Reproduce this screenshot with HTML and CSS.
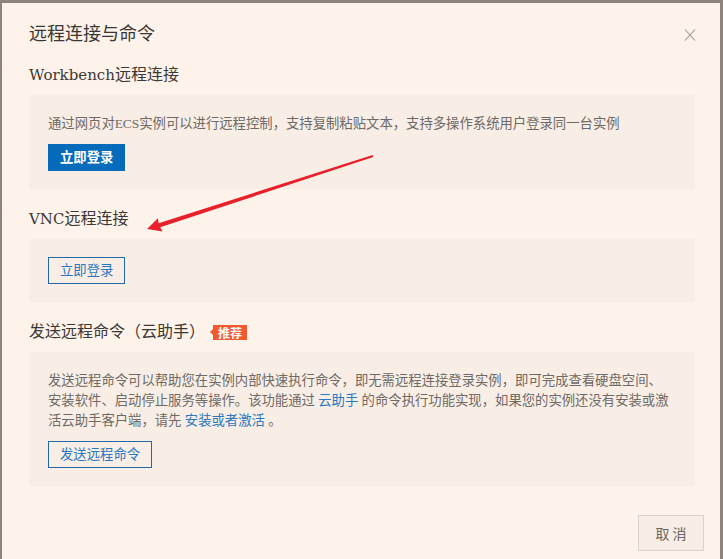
FILE: index.html
```html
<!DOCTYPE html>
<html lang="zh-CN">
<head>
<meta charset="utf-8">
<title>远程连接与命令</title>
<link rel="stylesheet" href="styles.css">
</head>
<body>
<div class="dialog">
  <div class="header">
    <div class="title">远程连接与命令</div>
    <svg class="close" width="12" height="12" viewBox="0 0 12 12"><path d="M1 0.5 L11 11.5 M11 0.5 L1 11.5" stroke="#9c9690" stroke-width="1.1" fill="none"/></svg>
  </div>
  <div class="body">
    <div class="sec-title"><span class="latin">Workbench</span>远程连接</div>
    <div class="box">
      <p class="desc">通过网页对ECS实例可以进行远程控制，支持复制粘贴文本，支持多操作系统用户登录同一台实例</p>
      <button class="btn btn-primary">立即登录</button>
    </div>

    <div class="sec-title"><span class="latin">VNC</span>远程连接</div>
    <div class="box box-only">
      <button class="btn btn-outline">立即登录</button>
    </div>

    <div class="sec-title">发送远程命令（云助手）<span class="badge">推荐</span></div>
    <div class="box">
      <p class="desc">发送远程命令可以帮助您在实例内部快速执行命令，即无需远程连接登录实例，即可完成查看硬盘空间、安装软件、启动停止服务等操作。该功能通过 <a class="link">云助手</a> 的命令执行功能实现，如果您的实例还没有安装或激活云助手客户端，请先 <a class="link">安装或者激活</a> 。</p>
      <button class="btn btn-outline">发送远程命令</button>
    </div>
  </div>
  <div class="footer">
    <button class="btn-cancel">取 消</button>
  </div>
</div>
<svg class="arrow" width="723" height="559" viewBox="0 0 723 559">
  <polygon fill="#e8202a" points="147,229 162.5,231.5 160.2,227.2 373.3,157 372.7,155 158.6,223.2 158,218.2"/>
</svg>
</body>
</html>
```

FILE: styles.css
```css
html, body {
  margin: 0;
  padding: 0;
  width: 723px;
  height: 559px;
  overflow: hidden;
  background: #8b837c;
  font-family: "Liberation Serif", "Noto Sans CJK SC", serif;
}

.dialog {
  margin: 3px 0 0 2px;
  width: 718px;
  min-height: 570px;
  background: #fdf3ea;
  box-sizing: border-box;
}

.header {
  display: flex;
  justify-content: space-between;
  align-items: center;
  padding: 19px 24px 0 27px;
  height: 24px;
}

.title {
  font-size: 18px;
  line-height: 24px;
  color: #3a3633;
}

.close {
  display: block;
  margin-top: 1px;
}

.body {
  padding: 0 25px 0 27px;
}

.sec-title {
  display: flex;
  align-items: center;
  font-size: 16px;
  line-height: 20px;
  color: #3c3835;
  margin-top: 20px;
  margin-bottom: 10px;
}

.latin {
  font-family: "DejaVu Serif", serif;
  font-size: 15px;
}

.body > .sec-title:first-child {
  margin-top: 19px;
}

.badge {
  position: relative;
  margin-left: 8px;
  background: #ef5a31;
  color: #fff;
  font-size: 12px;
  font-weight: bold;
  line-height: 15px;
  height: 15px;
  padding: 0 5px;
  font-family: "Noto Sans CJK SC", sans-serif;
}

.badge::before {
  content: "";
  position: absolute;
  left: -3px;
  top: 4px;
  border-top: 3.5px solid transparent;
  border-bottom: 3.5px solid transparent;
  border-right: 3px solid #ef5a31;
}

.box {
  background: #f8eee5;
  padding: 19px 22px 18px 19px;
}

.box-only {
  padding-top: 18px;
}

.desc {
  margin: 0 0 10px 0;
  font-size: 13.35px;
  line-height: 20px;
  color: #6f6a66;
}

.link {
  color: #2a78c0;
  text-decoration: none;
}

.btn {
  display: block;
  height: 27px;
  padding: 0 11px;
  font-size: 13.35px;
  font-family: "Liberation Serif", "Noto Sans CJK SC", serif;
  line-height: 25px;
  cursor: pointer;
  box-sizing: border-box;
}

.btn-primary {
  background: #066bbb;
  border: 1px solid #066bbb;
  color: #fff;
  font-weight: bold;
}

.btn-outline {
  background: transparent;
  border: 1px solid #2467a6;
  color: #2b78bf;
}

.footer {
  display: flex;
  justify-content: flex-end;
  padding: 29px 16px 0 0;
}

.btn-cancel {
  width: 66px;
  height: 36px;
  background: #f8eee5;
  border: 1px solid #ddd2c8;
  color: #6b6661;
  font-size: 14px;
  font-family: "Noto Sans CJK SC", sans-serif;
  padding: 0;
}

.arrow {
  position: absolute;
  left: 0;
  top: 0;
  pointer-events: none;
}
```
